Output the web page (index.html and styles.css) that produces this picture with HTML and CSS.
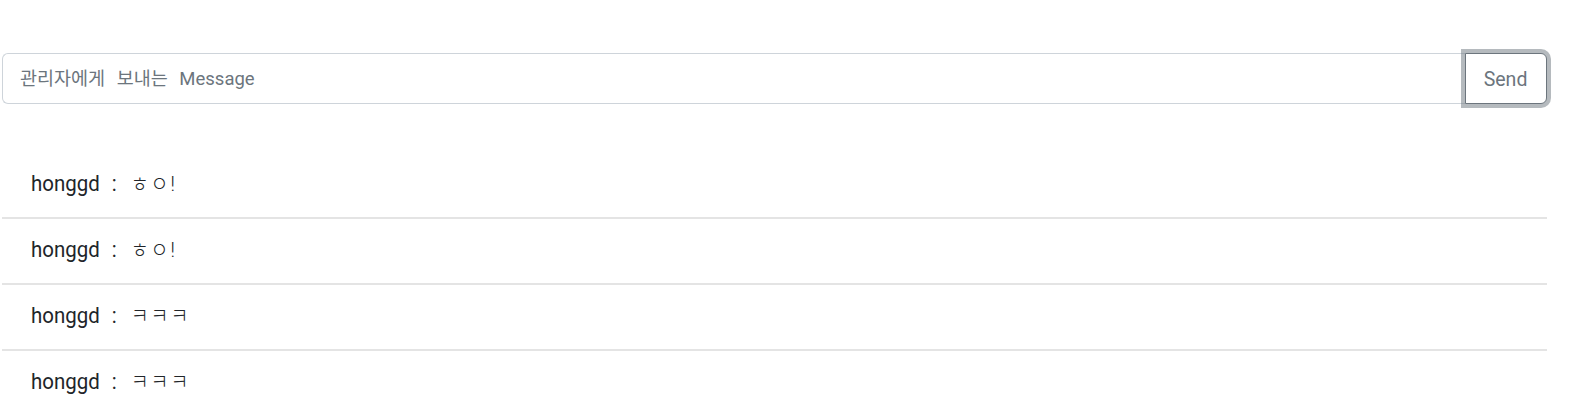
FILE: index.html
```html
<!DOCTYPE html>
<html lang="ko">
<head>
<meta charset="utf-8">
<title>Chat</title>
<link rel="stylesheet" href="styles.css">
</head>
<body>
<div class="page">
  <div class="input-group">
    <input class="msg-input" type="text" placeholder="관리자에게 보내는 Message">
    <button class="send-btn" type="button"><span class="btn-label">Send</span></button>
  </div>
  <ul class="msg-list">
    <li class="msg-item"><span class="line"><span class="user">honggd</span><span class="sep">:</span><span class="text">ㅎㅇ!</span></span></li>
    <li class="msg-item"><span class="line"><span class="user">honggd</span><span class="sep">:</span><span class="text">ㅎㅇ!</span></span></li>
    <li class="msg-item"><span class="line"><span class="user">honggd</span><span class="sep">:</span><span class="text">ㅋㅋㅋ</span></span></li>
    <li class="msg-item"><span class="line"><span class="user">honggd</span><span class="sep">:</span><span class="text">ㅋㅋㅋ</span></span></li>
  </ul>
</div>
</body>
</html>
```

FILE: styles.css
```css
* { box-sizing: border-box; }
html, body { margin: 0; padding: 0; background: #fff; }
body {
  font-family: Roboto, "Noto Sans CJK KR", sans-serif;
  color: #212529;
}
.page {
  width: 1547px;
  padding: 53px 0 0 2px;
}
.input-group {
  display: flex;
  height: 51px;
}
.msg-input {
  flex: 1;
  min-width: 0;
  height: 51px;
  border: 1px solid #ced4da;
  border-right: none;
  border-radius: 6px 0 0 6px;
  padding: 0 16px 0 17px;
  font-family: Roboto, "Noto Sans CJK KR", sans-serif;
  font-size: 18.5px;
  word-spacing: 7px;
  color: #212529;
  outline: none;
  background: #fff;
}
.msg-input::placeholder { color: #6c757d; opacity: 1; }
.send-btn {
  width: 82px;
  height: 51px;
  border: 1px solid #6c757d;
  border-radius: 0 6px 6px 0;
  background: #fff;
  color: #6c757d;
  font-family: Roboto, "Noto Sans CJK KR", sans-serif;
  font-size: 21px;
  padding: 0;
  box-shadow: 0 0 0 4px rgba(108, 117, 125, 0.5);
  position: relative;
  z-index: 1;
}
.btn-label {
  display: inline-block;
  transform: scaleX(0.93);
}
.msg-list {
  list-style: none;
  margin: 49px 0 0 0;
  padding: 0;
}
.msg-item {
  padding: 15px 28px 17px 29px;
  font-size: 22px;
  line-height: 32px;
  border-bottom: 2px solid #e4e4e4;
}
.line {
  display: inline-flex;
  transform: scaleX(0.93);
  transform-origin: left center;
}
.sep { margin: 0 15px 0 13px; }
.text { font-size: 21px; font-weight: 300; letter-spacing: 2px; }
```
